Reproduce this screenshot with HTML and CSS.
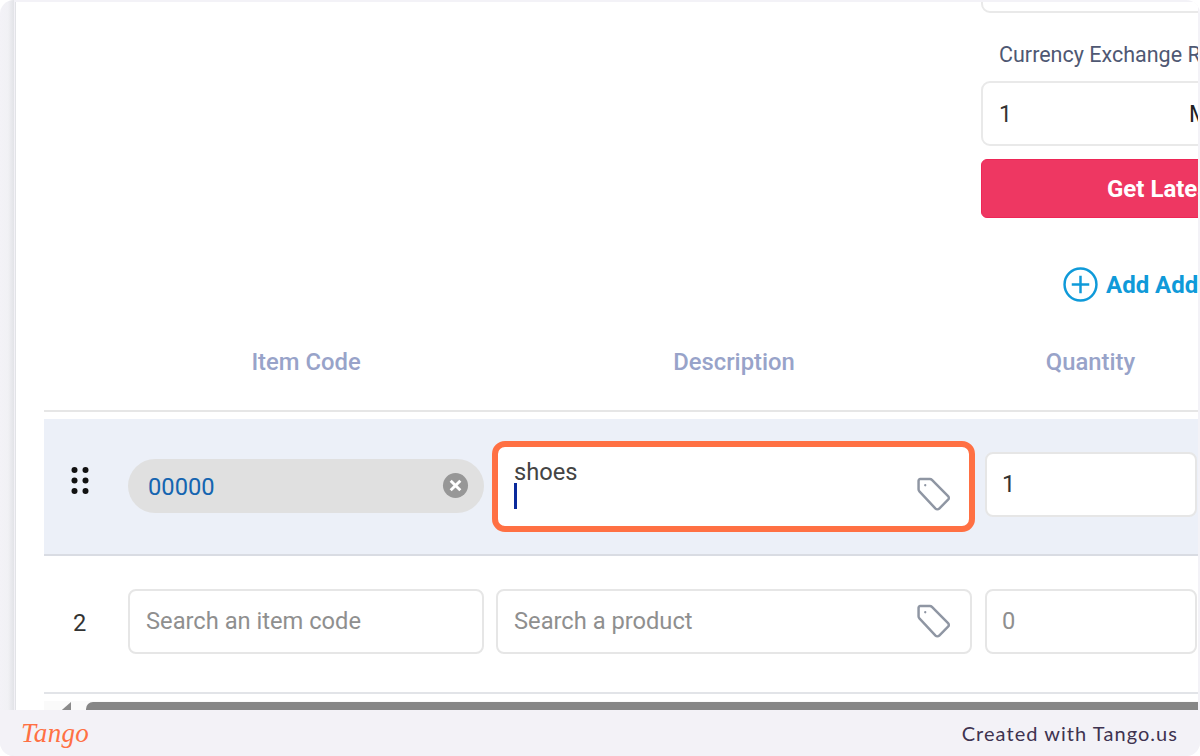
FILE: index.html
```html
<!DOCTYPE html>
<html lang="en">
<head>
<meta charset="utf-8">
<title>Invoice items</title>
<link rel="stylesheet" href="styles.css">
</head>
<body>
<div class="page">
  <main class="sheet">
    <section class="rate">
      <div class="field field-top"></div>
      <div class="rate-label">Currency Exchange Rate</div>
      <div class="field field-rate"><span>1</span><span class="unit">MYR</span></div>
      <button class="get-rate">Get Latest Rate</button>
      <div class="add-more">
        <svg class="add-icon" viewBox="0 0 34 34"><circle cx="17" cy="17" r="15.5"/><path d="M17 8.5v17M8.5 17h17"/></svg>
        <span>Add Additional Charges</span>
      </div>
    </section>
    <section class="table">
      <div class="grid head">
        <div></div>
        <div class="th">Item Code</div>
        <div class="th">Description</div>
        <div class="th th-qty">Quantity</div>
      </div>
      <div class="grid row row-active">
        <div class="handle">
          <svg viewBox="0 0 18 30"><g><circle cx="3.5" cy="4" r="3"/><circle cx="14.5" cy="4" r="3"/><circle cx="3.5" cy="14.5" r="3"/><circle cx="14.5" cy="14.5" r="3"/><circle cx="3.5" cy="25" r="3"/><circle cx="14.5" cy="25" r="3"/></g></svg>
        </div>
        <div class="chip">
          <span class="chip-text">00000</span>
          <svg class="chip-x" viewBox="0 0 28 28"><circle cx="14" cy="14" r="13" /><path d="M9 9l10 10M19 9L9 19"/></svg>
        </div>
        <div class="desc desc-active">
          <div class="desc-text">shoes<span class="caret"></span></div>
          <svg class="tag" viewBox="0 0 36 36"><path d="M4 3h9.500c.8 0 1.500.3 2 .8l15.700 15.700c1 1 1 2.600 0 3.600l-8.600 8.600c-1 1-2.600 1-3.600 0L3.300 15c-.5-.5-.8-1.200-.8-2V4.500C2.500 3.700 3.200 3 4 3z"/><circle cx="9" cy="9" r=".6"/></svg>
        </div>
        <div class="qty qty-filled">1</div>
      </div>
      <div class="grid row">
        <div class="num">2</div>
        <div class="box muted">Search an item code</div>
        <div class="desc"><span class="muted">Search a product</span>
          <svg class="tag" viewBox="0 0 36 36"><path d="M4 3h9.500c.8 0 1.500.3 2 .8l15.700 15.700c1 1 1 2.600 0 3.600l-8.600 8.600c-1 1-2.600 1-3.600 0L3.300 15c-.5-.5-.8-1.200-.8-2V4.500C2.500 3.700 3.200 3 4 3z"/><circle cx="9" cy="9" r=".6"/></svg>
        </div>
        <div class="qty muted">0</div>
      </div>
    </section>
    <div class="scrollbar">
      <span class="arrow"></span>
      <span class="thumb"></span>
    </div>
  </main>
  <footer class="footer">
    <span class="logo">Tango</span>
    <span class="credit">Created with Tango.us</span>
  </footer>
</div>
</body>
</html>
```
FILE: styles.css
```css
* { box-sizing: border-box; }
html, body { margin: 0; padding: 0; background: #fff; }
body { font-family: Roboto, "Liberation Sans", sans-serif; }
.page {
  width: 1200px; height: 756px; border-radius: 14px;
  display: flex; flex-direction: column; overflow: hidden;
  background: linear-gradient(90deg, #f3f2f7 0, #f1f1f5 8px, #e2e3e7 14px, #f3f2f7 14px);
}
.sheet {
  flex: 1; min-height: 0; margin: 2px 2px 0 15px; background: #fff; overflow: hidden;
  border-left: 1px solid #e2e3e7;
  display: flex; flex-direction: column; position: relative;
}
.rate { margin-left: 965px; width: 420px; flex: none; height: 326px; }
.field { border: 2px solid #e9e9e9; border-radius: 9px; background: #fff; }
.field-top { height: 40px; margin-top: -29px; }
.rate-label { margin: 29px 0 0 18px; font-size: 21.5px; line-height: 26px; color: #4f5873; white-space: nowrap; }
.field-rate {
  height: 65px; margin-top: 13px; padding: 2px 16px 0; font-size: 23px; color: #333;
  display: flex; align-items: center; gap: 177px;
}
.field-rate .unit { color: #222; }
.get-rate {
  display: block; width: 418px; height: 59px; margin-top: 13px; border: 1px solid #ee2757; border-radius: 6px;
  background: #ee3762; color: #fff; font: 700 24px Roboto, sans-serif; text-align: center;
}
.add-more {
  margin: 49px 0 0 82px; display: flex; align-items: center; gap: 8px;
  color: #0f9ad9; font-size: 24px; font-weight: 700; white-space: nowrap;
}
.add-icon { width: 35px; height: 35px; flex: none; fill: none; stroke: #0f9ad9; stroke-width: 2.4; }
.table { margin-left: 28px; width: 1300px; flex: none; }
.grid { display: grid; grid-template-columns: 72px 356px 476px 212px; column-gap: 12px; }
.head { height: 84px; align-items: center; border-bottom: 2px solid #e6e6e6; margin-bottom: 7px; padding-bottom: 15px; }
.th { font-size: 23.8px; font-weight: 500; color: #98a3c9; text-align: center; white-space: nowrap; }
.th-qty { margin-left: 1px; }
.row { height: 138px; align-items: center; border-bottom: 2px solid #e2e4e8; font-size: 23.7px; padding-bottom: 6px; }
.row-active { height: 137px; background: #ecf0f8; border-bottom-color: #d9dce3; padding-bottom: 4px; }
.handle { padding-left: 27px; }
.handle svg { display: block; width: 18px; height: 30px; margin-top: -7px; fill: #111; }
.num { padding-left: 29px; color: #333; padding-top: 4px; }
.chip {
  height: 54px; border-radius: 27px; background: #e0e0e0; display: flex; align-items: center;
  justify-content: space-between; padding: 0 15px 0 20px; margin-top: 2px;
}
.chip-text { color: #1565b0; padding-top: 3px; }
.chip-x { width: 27px; height: 27px; flex: none; }
.chip-x circle { fill: #979797; }
.chip-x path { stroke: #fff; stroke-width: 3; fill: none; }
.box, .desc, .qty { height: 65px; border: 2px solid #e6e6e6; border-radius: 8px; background: #fff; padding: 0 16px; display: flex; align-items: center; }
.desc { justify-content: space-between; padding-right: 18px; }
.desc-active {
  height: 91px; margin: 4px -3px 0 -4px; border: 6px solid #ff7043; border-radius: 13px; align-items: flex-start;
  padding: 12px 16px 0 16px;
}
.desc-text { line-height: 26px; color: #444; }
.caret { display: block; width: 2.500px; height: 26px; background: #0a2a9c; margin-top: -2px; }
.qty { width: 212px; color: #333; margin-left: 1px; padding: 0 15px; }
.qty-filled { padding-bottom: 2px; }
.muted { color: #8f8f8f; }
.tag { width: 37px; height: 37px; flex: none; fill: none; stroke: #8f96a3; stroke-width: 2.400; }
.tag circle { fill: #8f96a3; stroke-width: 1; }
.desc-active .tag { margin: 17px 0 0; }
.desc:not(.desc-active) .tag { margin-right: -1px; }
.scrollbar { height: 9px; margin: 7px 0 0 28px; display: flex; align-items: flex-start; background: #fafafa; padding-top: 1px; flex: none; }
.arrow { width: 0; height: 0; border-right: 16px solid #8a8a8a; border-top: 14px solid transparent; margin-left: 11px; }
.thumb { flex: 1; height: 14px; background: #868686; border-radius: 7px 0 0 7px; margin-left: 15px; }
.footer { height: 46px; flex: none; display: flex; align-items: center; justify-content: space-between; padding: 0 22px 0 21px; background: #f3f2f7; }
.logo { font-family: "Liberation Serif", serif; font-style: italic; font-size: 27px; color: #ff7043; letter-spacing: .3px; }
.credit { font-family: Lato, sans-serif; font-size: 20px; color: #3e3350; letter-spacing: 1.05px; }
```
